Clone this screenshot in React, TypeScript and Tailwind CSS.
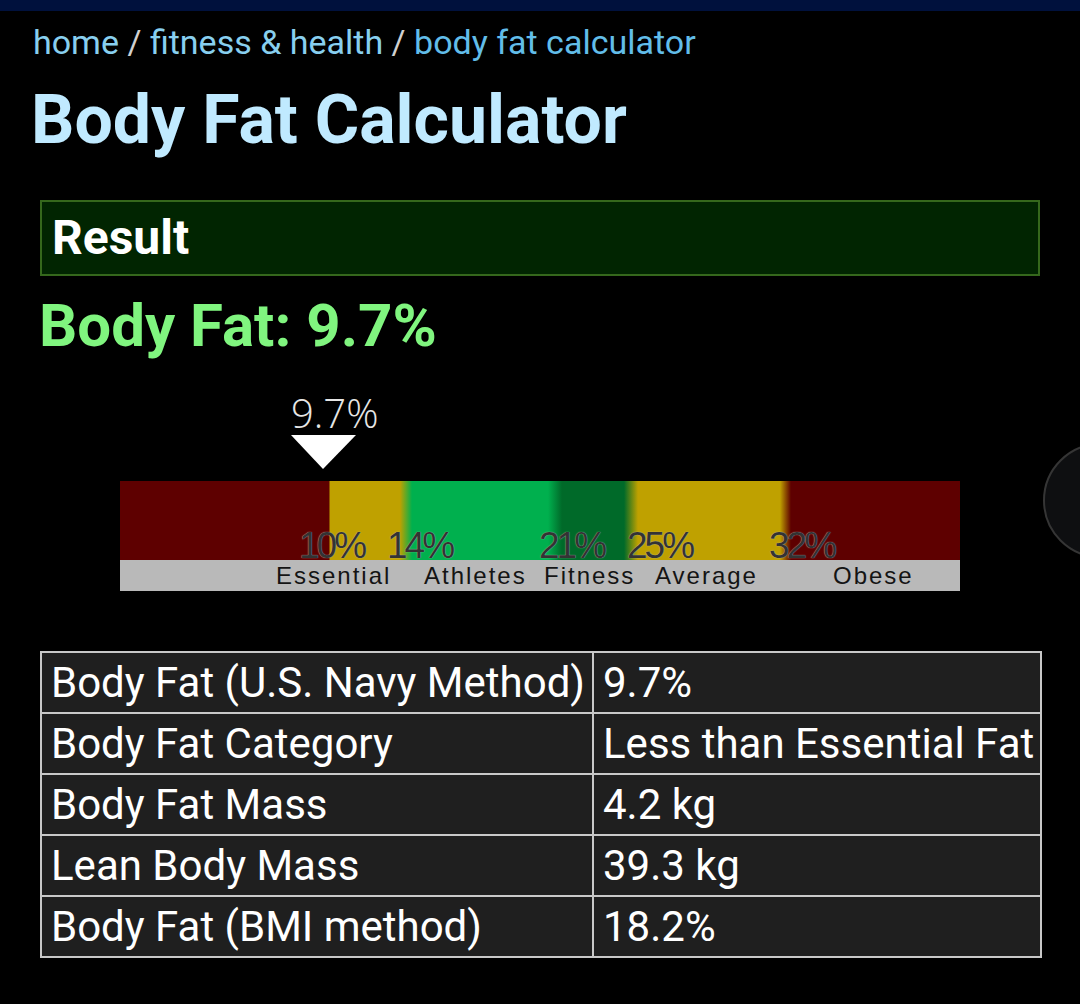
const rows = [
  ["Body Fat (U.S. Navy Method)", "9.7%"],
  ["Body Fat Category", "Less than Essential Fat"],
  ["Body Fat Mass", "4.2 kg"],
  ["Lean Body Mass", "39.3 kg"],
  ["Body Fat (BMI method)", "18.2%"],
];

const marks = [
  { label: "10%", left: 179 },
  { label: "14%", left: 267 },
  { label: "21%", left: 419 },
  { label: "25%", left: 507 },
  { label: "32%", left: 649 },
];

const categories = [
  { label: "Essential", left: 156 },
  { label: "Athletes", left: 304 },
  { label: "Fitness", left: 424 },
  { label: "Average", left: 535 },
  { label: "Obese", left: 713 },
];

const BodyFatScale = ({ value }: { value: number }) => {
  // marker x on the 840px image, roughly linear between the 10% tick and the left edge
  const markerLeft = 171 + (value - 9.7) * 21;

  return (
    <div className="relative mx-auto w-[840px] h-[206px]">
      <div className="absolute top-[4px] font-['Open_Sans',sans-serif] font-light text-[40px] leading-[48px] text-[#e6e6e6]" style={{ left: markerLeft }}>
        {value}%
      </div>
      <div
        className="absolute top-[50px] w-0 h-0 border-l-[32px] border-r-[33px] border-t-[34px] border-l-transparent border-r-transparent border-t-white"
        style={{ left: markerLeft }}
      />
      <div className="absolute left-0 bottom-0 w-[840px] h-[110px]">
        <div className="h-[79px] bg-[linear-gradient(to_right,#5e0000_0px,#5e0000_209px,#bfa100_210px,#bfa100_280px,#00b04e_292px,#00b04e_428px,#006a29_442px,#006a29_504px,#bfa100_518px,#bfa100_660px,#5e0000_671px,#5e0000_840px)]" />
        <div className="h-[31px] bg-[#b9b9b9]" />
        {marks.map((m) => (
          <span key={m.label} className="absolute top-[46px] font-['Liberation_Sans',Arial,sans-serif] text-[37px] leading-none tracking-[-3px] text-[#333333] [text-shadow:0_0_1px_#cfcfcf]" style={{ left: m.left }}>
            {m.label}
          </span>
        ))}
        {categories.map((c) => (
          <span key={c.label} className="absolute top-[83px] font-['Liberation_Sans',Arial,sans-serif] text-[24px] leading-none tracking-[2px] text-[#141414]" style={{ left: c.left }}>
            {c.label}
          </span>
        ))}
      </div>
    </div>
  );
};

export default function App() {
  return (
    <div className="relative min-h-[1004px] w-full overflow-hidden bg-black font-['Roboto','Noto_Sans',sans-serif]">
      <div className="h-[11px] bg-[#00113d]" />

      <div className="px-[33px] mt-[11px] text-[34px] leading-[40px]">
        <span className="text-[#88cfef]">home</span>
        <span className="text-[#d0d0d0]"> / </span>
        <span className="text-[#88cfef]">fitness &amp; health</span>
        <span className="text-[#d0d0d0]"> / </span>
        <span className="text-[#62bde9]">body fat calculator</span>
      </div>

      <h1 className="px-[31px] mt-[18px] text-[68px] leading-[80px] font-bold text-[#c0eaff]">Body Fat Calculator</h1>

      <div className="mx-[40px] mt-[40px] h-[76px] border-2 border-[#35681c] bg-[#012501] px-[10px] text-[48px] leading-[72px] font-bold text-white">Result</div>

      <div className="px-[39px] mt-[14px] text-[60px] leading-[72px] font-bold text-[#80f57f]">Body Fat: 9.7%</div>

      <div className="mt-[23px]">
        <BodyFatScale value={9.7} />
      </div>

      <table className="mx-[40px] mt-[60px] w-[1002px] table-fixed border-collapse bg-[#1f1f1f] text-[42px] leading-[48px] text-white">
        <tbody>
          {rows.map(([k, v]) => (
            <tr key={k}>
              <td className="w-[552px] h-[61px] border-2 border-[#c8c8c8] pl-[9px] pr-0 py-0 align-middle whitespace-nowrap">{k}</td>
              <td className="h-[61px] border-2 border-[#c8c8c8] pl-[9px] pr-0 py-0 align-middle whitespace-nowrap">{v}</td>
            </tr>
          ))}
        </tbody>
      </table>

      <div className="absolute left-[1043px] top-[443px] w-[115px] h-[115px] rounded-full border-2 border-[#353535] bg-[#0e0f11]" />
    </div>
  );
}
